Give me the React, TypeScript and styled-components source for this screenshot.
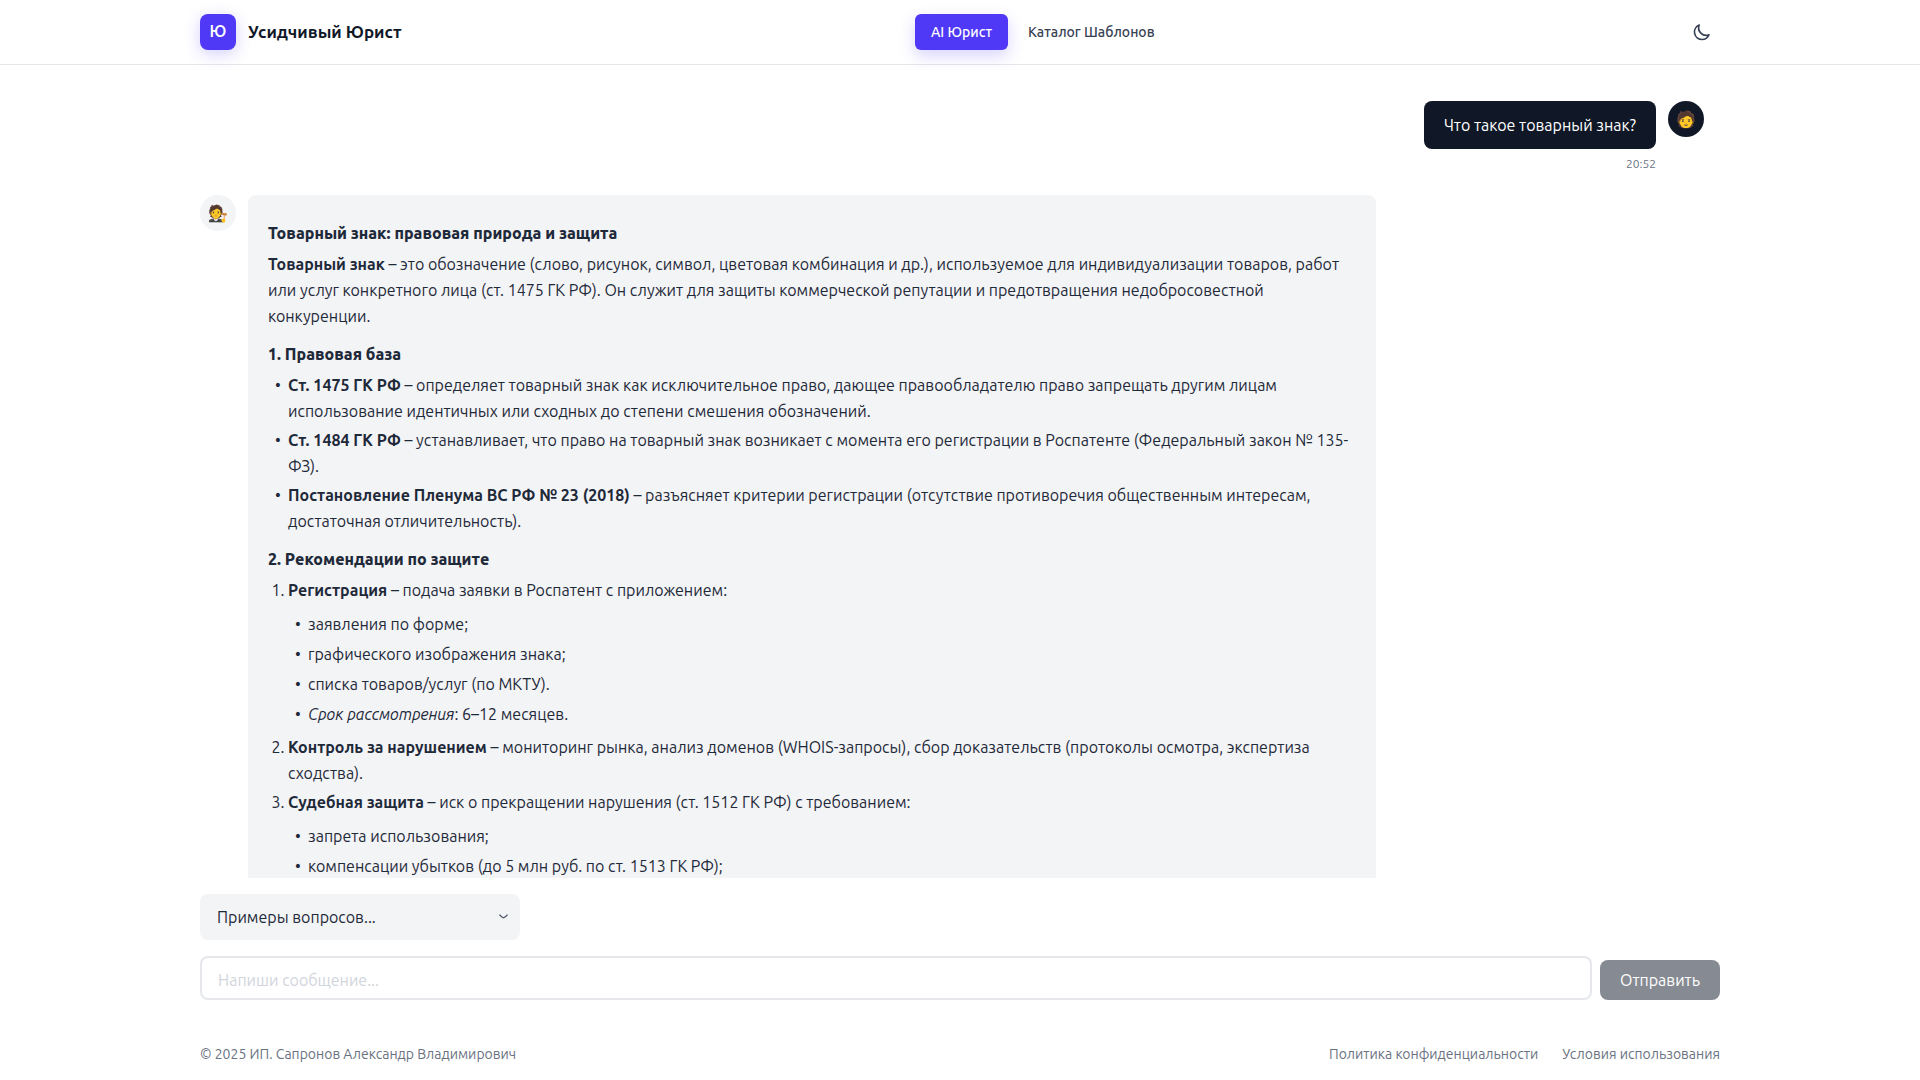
import React, { useState } from 'react';
import styled, { createGlobalStyle } from 'styled-components';
import { HiOutlineMoon } from 'react-icons/hi';

const font = '"Ubuntu Sans", Ubuntu, "Noto Sans", sans-serif';

const GlobalStyle = createGlobalStyle`
  *, *::before, *::after { box-sizing: border-box; }
  body {
    margin: 0;
    background: #ffffff;
    color: #1e2939;
    font-family: ${font};
    font-size: 16px;
    line-height: 24px;
  }
  button, input, select, textarea { font: inherit; color: inherit; }
  a { color: inherit; text-decoration: none; }
`;

const Page = styled.div`
  height: 100vh;
  display: flex;
  flex-direction: column;
`;

const Container = styled.div`
  width: 100%;
  max-width: 1536px;
  margin: 0 auto;
  padding: 0 8px;
`;

const Header = styled.header`
  flex: none;
  border-bottom: 1px solid #e5e7eb;
`;

const HeaderRow = styled(Container)`
  height: 64px;
  display: flex;
  align-items: center;
  justify-content: space-between;
`;

const Brand = styled.a`
  display: flex;
  align-items: center;
  gap: 12px;
  font-size: 17px;
  font-weight: 700;
  color: #101828;
`;

const Logo = styled.span`
  width: 36px;
  height: 36px;
  display: grid;
  place-items: center;
  border-radius: 8px;
  background: #4f39f6;
  color: #ffffff;
  font-size: 16px;
  font-weight: 600;
  box-shadow: 0 4px 16px rgba(79, 57, 246, 0.24);
`;

const Nav = styled.nav`
  display: flex;
  gap: 4px;
`;

const NavLink = styled.a<{ $active?: boolean }>`
  padding: 9px 16px 7px;
  border-radius: 6px;
  font-size: 14px;
  line-height: 20px;
  font-weight: 500;
  color: ${({ $active }) => ($active ? '#ffffff' : '#364153')};
  background: ${({ $active }) => ($active ? '#4f39f6' : 'transparent')};
  box-shadow: ${({ $active }) => ($active ? '0 6px 16px rgba(79, 57, 246, 0.22)' : 'none')};
`;

const IconButton = styled.button`
  width: 36px;
  height: 36px;
  display: grid;
  place-items: center;
  padding: 0;
  border: 0;
  border-radius: 8px;
  background: transparent;
  color: #364153;
  cursor: pointer;
`;

const Main = styled(Container)`
  flex: 1;
  min-height: 0;
  display: flex;
  flex-direction: column;
`;

const Messages = styled.section`
  flex: 1;
  min-height: 0;
  overflow: hidden;
  padding: 36px 16px 0 0;
  display: flex;
  flex-direction: column;
  gap: 23px;
`;

const Message = styled.article<{ $own?: boolean }>`
  flex: none;
  display: flex;
  flex-direction: ${({ $own }) => ($own ? 'row-reverse' : 'row')};
  align-items: flex-start;
  gap: 12px;
`;

const Avatar = styled.span<{ $own?: boolean }>`
  flex: none;
  width: 36px;
  height: 36px;
  display: grid;
  place-items: center;
  padding-top: 2px;
  border-radius: 50%;
  background: ${({ $own }) => ($own ? '#101828' : '#f3f4f6')};
`;

const MessageBody = styled.div`
  max-width: 75%;
  display: flex;
  flex-direction: column;
  align-items: flex-end;
  gap: 7px;
`;

const Bubble = styled.div<{ $own?: boolean }>`
  padding: 13px 20px 11px;
  border-radius: 8px;
  background: ${({ $own }) => ($own ? '#101828' : '#f3f4f6')};
  color: ${({ $own }) => ($own ? '#ffffff' : '#1e2939')};
`;

const Time = styled.time`
  font-size: 12px;
  line-height: 16px;
  color: #6a7282;
`;

const Answer = styled.div`
  padding-top: 1px;
  line-height: 26px;

  h3 {
    margin: 12px 0 5px;
    font-size: 16px;
    font-weight: 800;
  }
  p { margin: 0 0 12px; }
  strong { font-weight: 700; }
  ul, ol { margin: 0 0 12px; padding-left: 20px; }
  ul { list-style-type: "•\\00a0\\00a0"; }
  ol { list-style-type: decimal; }
  li + li { margin-top: 3px; }
  li > ul { margin: 8px 0 7px; }
  li li + li { margin-top: 4px; }
`;

const Composer = styled.form`
  flex: none;
  display: flex;
  flex-direction: column;
  gap: 16px;
  padding: 16px 0 32px;
`;

const SelectWrap = styled.div`
  position: relative;
  width: 320px;
  max-width: 100%;
`;

const ExampleSelect = styled.select`
  appearance: none;
  display: block;
  width: 100%;
  height: 46px;
  padding: 2px 40px 0 17px;
  border: 0;
  border-radius: 8px;
  background: #f3f4f6;
`;

const Chevron = styled.svg`
  position: absolute;
  right: 12px;
  top: 19px;
  pointer-events: none;
`;

const InputRow = styled.div`
  display: flex;
  align-items: flex-end;
  gap: 8px;
`;

const MessageInput = styled.textarea`
  flex: 1;
  display: block;
  height: 44px;
  padding: 11px 16px 5px;
  border: 2px solid #e5e7eb;
  border-radius: 8px;
  background: #ffffff;
  resize: none;
  overflow: hidden;
  &::placeholder { color: #d1d5dc; opacity: 1; }
`;

const SendButton = styled.button`
  padding: 9px 20px 7px;
  border: 0;
  border-radius: 8px;
  background: #101828;
  color: #ffffff;
  opacity: 0.5;
`;

const FooterRow = styled(Container)`
  flex: none;
  display: flex;
  justify-content: space-between;
  padding-top: 13px;
  padding-bottom: 15px;
  font-size: 14px;
  line-height: 20px;
  color: #6a7282;
`;

const FooterLinks = styled.nav`
  display: flex;
  gap: 24px;
`;

const examples = ['Что такое товарный знак?'];

export default function App() {
  const [example, setExample] = useState('');
  const [text, setText] = useState('');

  return (
    <Page>
      <GlobalStyle />
      <Header>
        <HeaderRow>
          <Brand href="#">
            <Logo>Ю</Logo>
            Усидчивый Юрист
          </Brand>
          <Nav>
            <NavLink href="#chat" $active>AI Юрист</NavLink>
            <NavLink href="#templates">Каталог Шаблонов</NavLink>
          </Nav>
          <IconButton type="button" aria-label="Тёмная тема">
            <HiOutlineMoon size={20} />
          </IconButton>
        </HeaderRow>
      </Header>

      <Main as="main">
        <Messages>
          <Message $own>
            <Avatar $own>🧑</Avatar>
            <MessageBody>
              <Bubble $own>Что такое товарный знак?</Bubble>
              <Time>20:52</Time>
            </MessageBody>
          </Message>
          <Message>
            <Avatar>🧑‍⚖️</Avatar>
            <MessageBody>
              <Bubble>
                <Answer>
                  <h3>Товарный знак: правовая природа и защита</h3>
                  <p>
                    <strong>Товарный знак</strong> – это обозначение (слово, рисунок, символ, цветовая комбинация и
                    др.), используемое для индивидуализации товаров, работ или услуг конкретного лица (ст. 1475 ГК РФ).
                    Он служит для защиты коммерческой репутации и предотвращения недобросовестной конкуренции.
                  </p>
                  <h3>1. Правовая база</h3>
                  <ul>
                    <li>
                      <strong>Ст. 1475 ГК РФ</strong> – определяет товарный знак как исключительное право, дающее
                      правообладателю право запрещать другим лицам использование идентичных или сходных до степени
                      смешения обозначений.
                    </li>
                    <li>
                      <strong>Ст. 1484 ГК РФ</strong> – устанавливает, что право на товарный знак возникает с момента
                      его регистрации в Роспатенте (Федеральный закон № 135-ФЗ).
                    </li>
                    <li>
                      <strong>Постановление Пленума ВС РФ № 23 (2018)</strong> – разъясняет критерии регистрации
                      (отсутствие противоречия общественным интересам, достаточная отличительность).
                    </li>
                  </ul>
                  <h3>2. Рекомендации по защите</h3>
                  <ol>
                    <li>
                      <strong>Регистрация</strong> – подача заявки в Роспатент с приложением:
                      <ul>
                        <li>заявления по форме;</li>
                        <li>графического изображения знака;</li>
                        <li>списка товаров/услуг (по МКТУ).</li>
                        <li><em>Срок рассмотрения</em>: 6–12 месяцев.</li>
                      </ul>
                    </li>
                    <li>
                      <strong>Контроль за нарушением</strong> – мониторинг рынка, анализ доменов (WHOIS-запросы), сбор
                      доказательств (протоколы осмотра, экспертиза сходства).
                    </li>
                    <li>
                      <strong>Судебная защита</strong> – иск о прекращении нарушения (ст. 1512 ГК РФ) с требованием:
                      <ul>
                        <li>запрета использования;</li>
                        <li>компенсации убытков (до 5 млн руб. по ст. 1513 ГК РФ);</li>
                      </ul>
                    </li>
                  </ol>
                </Answer>
              </Bubble>
            </MessageBody>
          </Message>
        </Messages>

        <Composer onSubmit={(e) => e.preventDefault()}>
          <SelectWrap>
            <ExampleSelect
              aria-label="Примеры вопросов"
              value={example}
              onChange={(e) => {
                setExample(e.target.value);
                setText(e.target.value);
              }}
            >
              <option value="">Примеры вопросов...</option>
              {examples.map((q) => (
                <option key={q} value={q}>{q}</option>
              ))}
            </ExampleSelect>
            <Chevron width="9" height="8" viewBox="0 0 9 8" fill="none" stroke="#4a5565" strokeWidth="1.3" aria-hidden="true">
              <path d="M0.5 1.7 C1.6 3.2 3 4.6 4.5 4.8 C6 4.6 7.4 3.2 8.5 1.7" />
            </Chevron>
          </SelectWrap>
          <InputRow>
            <MessageInput
              aria-label="Сообщение"
              rows={1}
              placeholder="Напиши сообщение..."
              value={text}
              onChange={(e) => setText(e.target.value)}
            />
            <SendButton type="submit" disabled={!text}>Отправить</SendButton>
          </InputRow>
        </Composer>
      </Main>

      <FooterRow as="footer">
        <span>© 2025 ИП. Сапронов Александр Владимирович</span>
        <FooterLinks>
          <a href="#privacy">Политика конфиденциальности</a>
          <a href="#terms">Условия использования</a>
        </FooterLinks>
      </FooterRow>
    </Page>
  );
}
